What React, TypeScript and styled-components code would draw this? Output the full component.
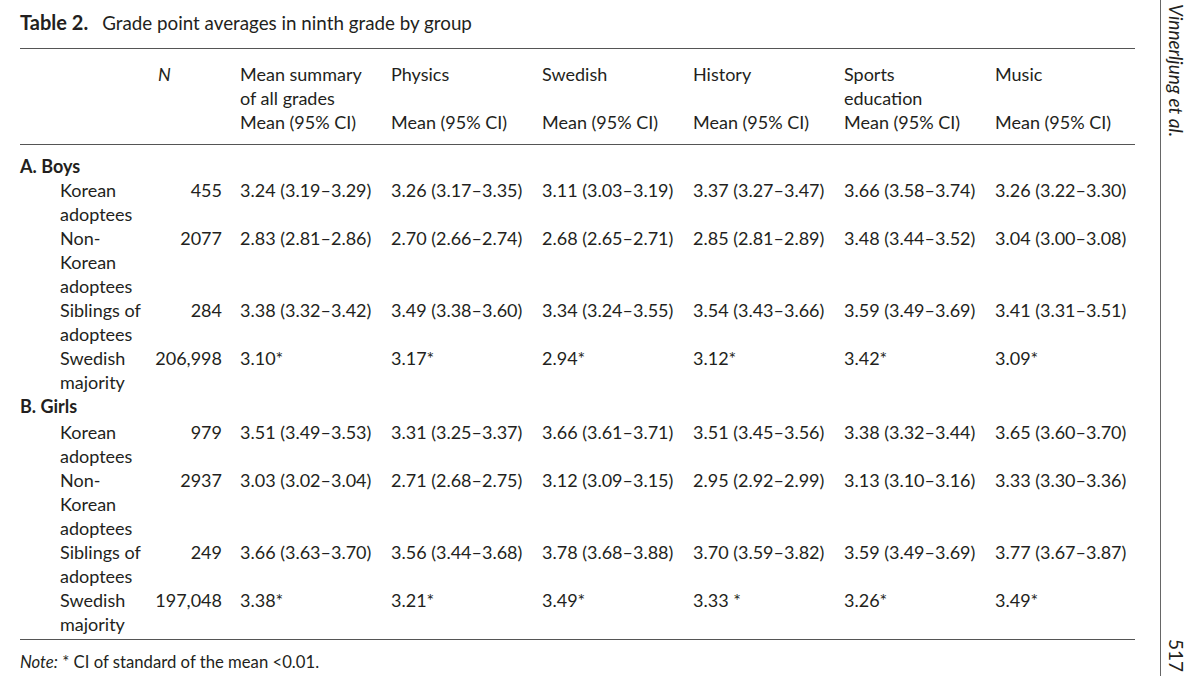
import React from 'react'
import styled, { createGlobalStyle } from 'styled-components'

const GlobalStyle = createGlobalStyle`
  html, body {
    margin: 0;
    padding: 0;
    background: #ffffff;
  }
  body {
    font-family: Lato, 'Open Sans', 'Liberation Sans', sans-serif;
    color: #231f20;
  }
`

const Page = styled.div`
  display: flex;
  width: 1200px;
  height: 684px;
  box-sizing: border-box;
`

const Main = styled.div`
  width: 1115px;
  padding-left: 20px;
  display: flex;
  flex-direction: column;
`

const Caption = styled.div`
  font-size: 18.8px;
  line-height: 24px;
  padding-top: 10px;
  padding-bottom: 13px;
  border-bottom: 1px solid #555;
  b {
    font-size: 20px;
    font-weight: 700;
    margin-right: 14px;
  }
`

const Table = styled.table`
  border-collapse: collapse;
  table-layout: fixed;
  width: 1115px;
  font-size: 18px;
  line-height: 24px;
  border-bottom: 1px solid #555;
`

const Col = styled.col<{ $w: number }>`
  width: ${({ $w }) => $w}px;
`

const HeadRow = styled.tr`
  border-bottom: 1px solid #555;
`

const HeadCell = styled.th<{ $pad?: number }>`
  font-weight: 400;
  text-align: left;
  vertical-align: top;
  padding: 13px 0 10px ${({ $pad }) => $pad ?? 18}px;
`

const NHead = styled(HeadCell)`
  font-style: italic;
`

const GroupCell = styled.td<{ $top: number }>`
  font-weight: 700;
  padding: ${({ $top }) => $top}px 0 0 0;
`

const LabelCell = styled.td<{ $top: number }>`
  vertical-align: top;
  padding: ${({ $top }) => $top}px 0 0 40px;
  white-space: nowrap;
`

const NCell = styled.td<{ $top: number }>`
  vertical-align: top;
  text-align: right;
  padding: ${({ $top }) => $top}px 0 0 0;
  white-space: nowrap;
`

const ValueCell = styled.td<{ $top: number }>`
  vertical-align: top;
  padding: ${({ $top }) => $top}px 0 0 18px;
  white-space: nowrap;
`

const Spacer = styled.td`
  height: 3px;
  padding: 0;
`

const Note = styled.div`
  font-size: 16.7px;
  line-height: 20px;
  padding-top: 12px;
  em {
    font-style: italic;
  }
`

const Side = styled.div`
  margin-left: 25px;
  height: 676px;
  border-left: 1px solid #666;
  padding-left: 5px;
  display: flex;
  flex-direction: column;
  justify-content: space-between;
`

const RunningHead = styled.div<{ $italic?: boolean }>`
  writing-mode: vertical-rl;
  font-size: 19px;
  line-height: 20px;
  font-style: ${({ $italic }) => ($italic ? 'italic' : 'normal')};
  padding-top: ${({ $italic }) => ($italic ? 4 : 0)}px;
  padding-bottom: ${({ $italic }) => ($italic ? 0 : 4)}px;
`

type Row = { label: string[]; n: string; values: string[] }

const groups: { title: string; rows: Row[] }[] = [
  {
    title: 'A. Boys',
    rows: [
      {
        label: ['Korean', 'adoptees'],
        n: '455',
        values: ['3.24 (3.19–3.29)', '3.26 (3.17–3.35)', '3.11 (3.03–3.19)', '3.37 (3.27–3.47)', '3.66 (3.58–3.74)', '3.26 (3.22–3.30)'],
      },
      {
        label: ['Non-', 'Korean', 'adoptees'],
        n: '2077',
        values: ['2.83 (2.81–2.86)', '2.70 (2.66–2.74)', '2.68 (2.65–2.71)', '2.85 (2.81–2.89)', '3.48 (3.44–3.52)', '3.04 (3.00–3.08)'],
      },
      {
        label: ['Siblings of', 'adoptees'],
        n: '284',
        values: ['3.38 (3.32–3.42)', '3.49 (3.38–3.60)', '3.34 (3.24–3.55)', '3.54 (3.43–3.66)', '3.59 (3.49–3.69)', '3.41 (3.31–3.51)'],
      },
      {
        label: ['Swedish', 'majority'],
        n: '206,998',
        values: ['3.10*', '3.17*', '2.94*', '3.12*', '3.42*', '3.09*'],
      },
    ],
  },
  {
    title: 'B. Girls',
    rows: [
      {
        label: ['Korean', 'adoptees'],
        n: '979',
        values: ['3.51 (3.49–3.53)', '3.31 (3.25–3.37)', '3.66 (3.61–3.71)', '3.51 (3.45–3.56)', '3.38 (3.32–3.44)', '3.65 (3.60–3.70)'],
      },
      {
        label: ['Non-', 'Korean', 'adoptees'],
        n: '2937',
        values: ['3.03 (3.02–3.04)', '2.71 (2.68–2.75)', '3.12 (3.09–3.15)', '2.95 (2.92–2.99)', '3.13 (3.10–3.16)', '3.33 (3.30–3.36)'],
      },
      {
        label: ['Siblings of', 'adoptees'],
        n: '249',
        values: ['3.66 (3.63–3.70)', '3.56 (3.44–3.68)', '3.78 (3.68–3.88)', '3.70 (3.59–3.82)', '3.59 (3.49–3.69)', '3.77 (3.67–3.87)'],
      },
      {
        label: ['Swedish', 'majority'],
        n: '197,048',
        values: ['3.38*', '3.21*', '3.49*', '3.33 *', '3.26*', '3.49*'],
      },
    ],
  },
]

const subjects = [
  ['Mean summary', 'of all grades'],
  ['Physics'],
  ['Swedish'],
  ['History'],
  ['Sports', 'education'],
  ['Music'],
]

const colWidths = [130, 72, 151, 151, 151, 151, 151, 158]

function Lines({ lines }: { lines: string[] }) {
  return (
    <>
      {lines.map((l, i) => (
        <React.Fragment key={i}>
          {i > 0 && <br />}
          {l}
        </React.Fragment>
      ))}
    </>
  )
}

export default function App() {
  return (
    <Page>
      <GlobalStyle />
      <Main>
        <Caption>
          <b>Table 2.</b>Grade point averages in ninth grade by group
        </Caption>
        <Table>
          <colgroup>
            {colWidths.map((w, i) => (
              <Col key={i} $w={w} />
            ))}
          </colgroup>
          <thead>
            <HeadRow>
              <HeadCell $pad={0} />
              <NHead $pad={8}>N</NHead>
              {subjects.map((s, i) => (
                <HeadCell key={i}>
                  <Lines lines={s.length === 1 ? [s[0], '\u00a0'] : s} />
                  <br />
                  Mean (95% CI)
                </HeadCell>
              ))}
            </HeadRow>
          </thead>
          <tbody>
            {groups.map((g, gi) => (
              <React.Fragment key={g.title}>
                <tr>
                  <GroupCell $top={gi === 0 ? 9 : 0} colSpan={8}>
                    {g.title}
                  </GroupCell>
                </tr>
                {g.rows.map((r, ri) => {
                  // first girls row sits a little lower under its heading
                  const top = gi === 1 && ri === 0 ? 2 : 0
                  return (
                    <tr key={ri}>
                      <LabelCell $top={top}>
                        <Lines lines={r.label} />
                      </LabelCell>
                      <NCell $top={top}>{r.n}</NCell>
                      {r.values.map((v, vi) => (
                        <ValueCell key={vi} $top={top}>
                          {v}
                        </ValueCell>
                      ))}
                    </tr>
                  )
                })}
              </React.Fragment>
            ))}
            <tr>
              <Spacer colSpan={8} />
            </tr>
          </tbody>
        </Table>
        <Note>
          <em>Note:</em> * CI of standard of the mean &lt;0.01.
        </Note>
      </Main>
      <Side>
        <RunningHead $italic>Vinnerljung et al.</RunningHead>
        <RunningHead>517</RunningHead>
      </Side>
    </Page>
  )
}
